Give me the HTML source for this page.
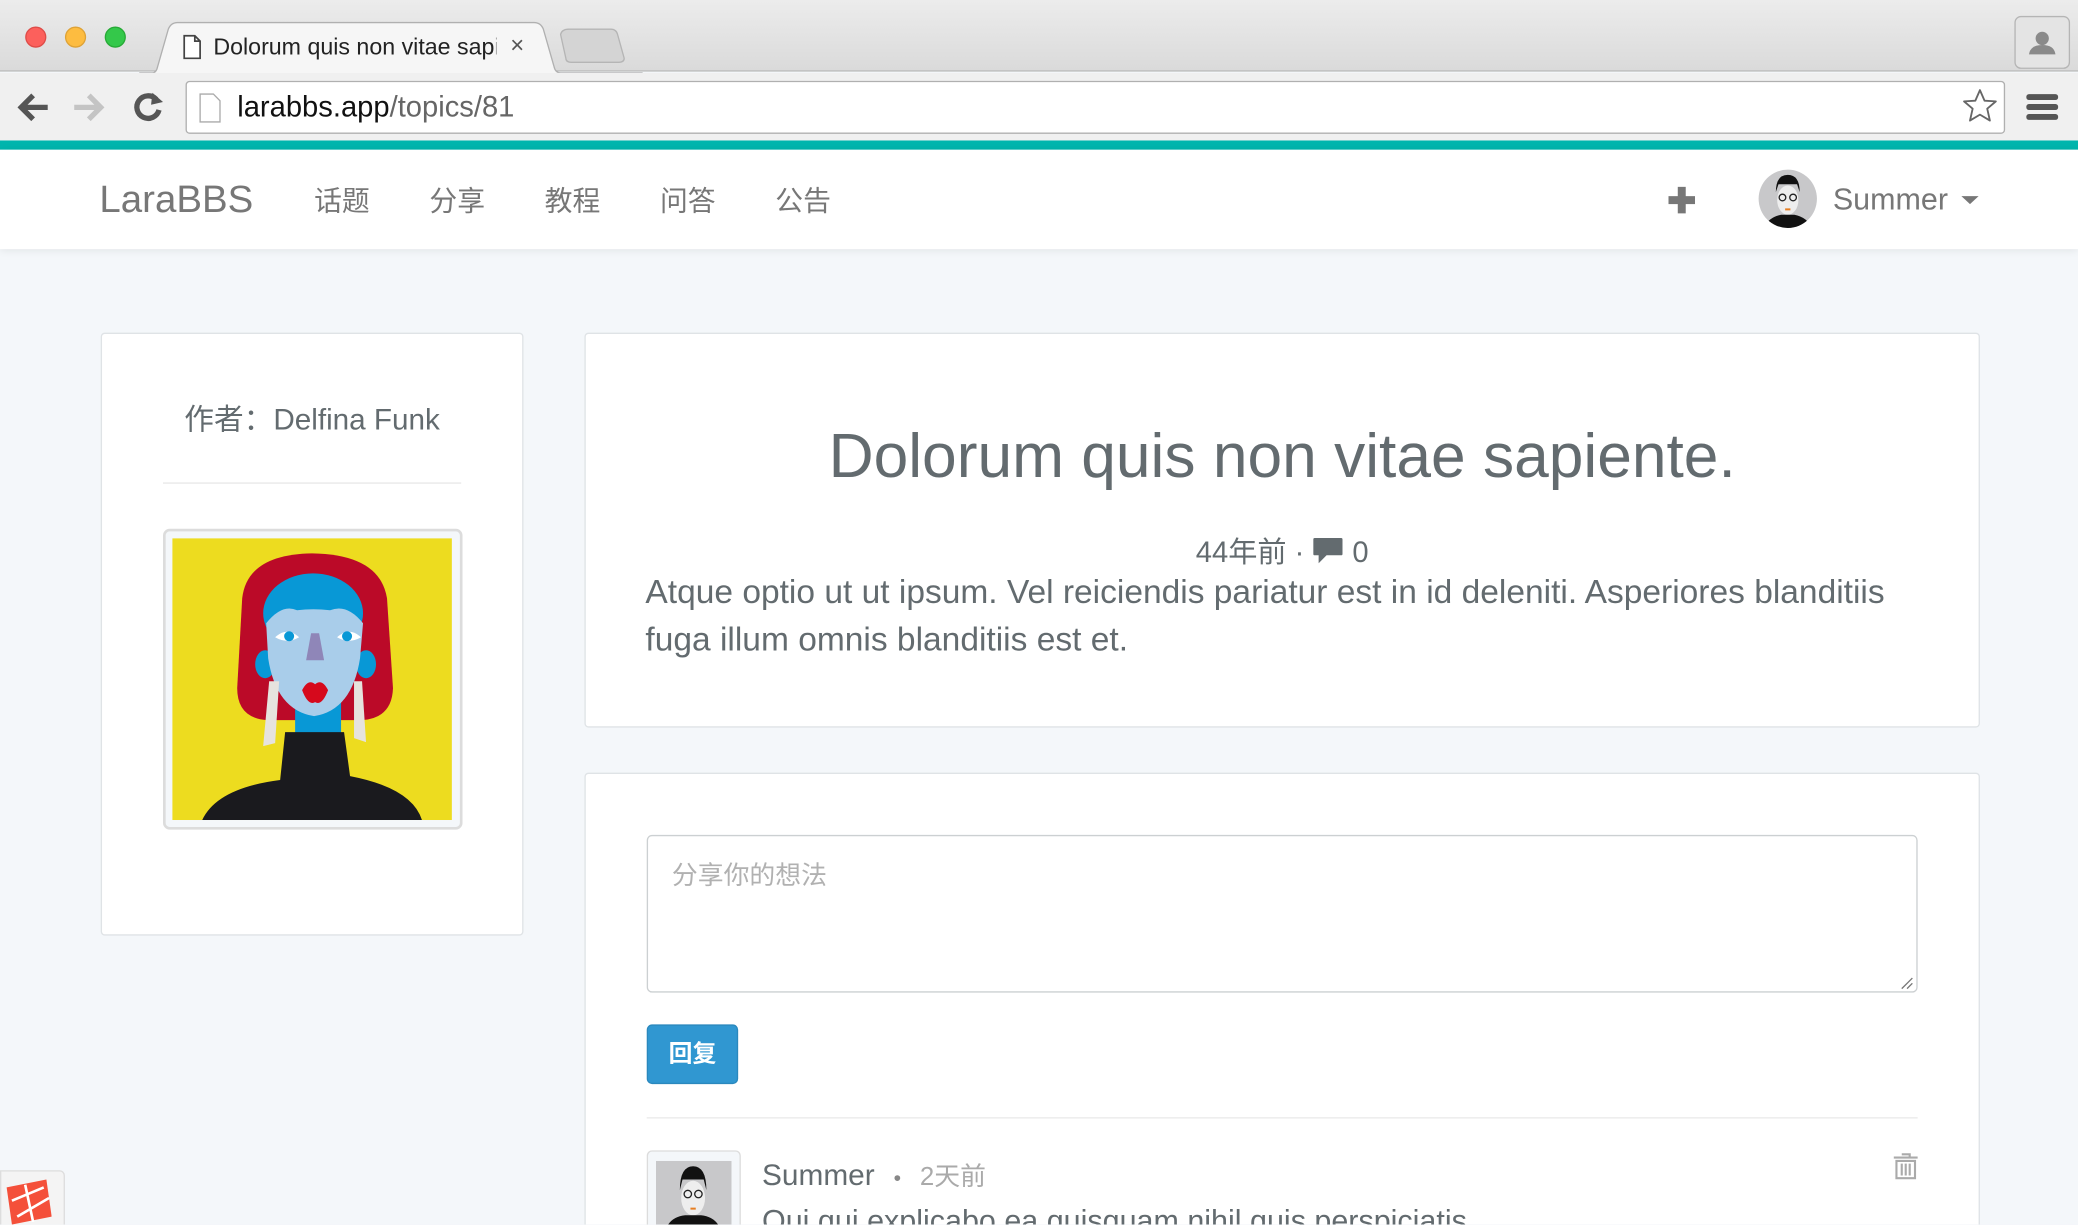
<!DOCTYPE html>
<html><head><meta charset="utf-8"><style>
*{box-sizing:border-box;margin:0;padding:0}
html,body{width:2078px;height:1224px;overflow:hidden;background:#f3f6f9}
#w{position:absolute;left:0;top:0;width:1568px;height:924px;transform:scale(1.32526);transform-origin:0 0;font-family:"Liberation Sans","Noto Sans CJK SC",sans-serif;color:#636b6f;background:#f4f7fa;overflow:hidden}
.a{position:absolute}
.card{position:absolute;background:#fff;border:1px solid #dfe3e6;border-radius:3px}
</style></head><body><div id="w">
<!-- chrome -->
<div class="a" style="left:0;top:0;width:1568px;height:54px;background:linear-gradient(#ececec,#dadada);border-bottom:1px solid #b8b8b8"></div>
<div class="a" style="left:19px;top:20px;width:16px;height:16px;border-radius:50%;background:#fc605c;border:1px solid #de4c48"></div>
<div class="a" style="left:49px;top:20px;width:16px;height:16px;border-radius:50%;background:#fdbc40;border:1px solid #dea236"></div>
<div class="a" style="left:79px;top:20px;width:16px;height:16px;border-radius:50%;background:#34c84a;border:1px solid #27aa36"></div>
<svg class="a" style="left:105px;top:16px" width="380" height="40"><path d="M0 39 L10 39 Q13 39 14 34 L22 6 Q24 1 29 1 L298 1 Q303 1 305 6 L313 34 Q314 39 318 39 L380 39" fill="#f6f6f6" stroke="#b0b0b0"/><path d="M318 10 Q319 6 324 6 L356 6 Q360 6 361 10 L366 28 Q366 31 362 31 L326 31 Q322 31 322 28Z" fill="#d4d4d4" stroke="#b5b5b5"/></svg>
<svg class="a" style="left:138px;top:26px" width="14" height="19"><path d="M1 1 H9 L13 5 V18 H1Z M9 1 V5 H13" fill="#fff" stroke="#444" stroke-width="1.3"/></svg>
<div class="a" style="left:161px;top:25px;font-size:17.5px;color:#222;white-space:nowrap;width:214px;overflow:hidden">Dolorum quis non vitae sap<span style="color:#aaa">iente.</span></div>
<div class="a" style="left:385px;top:24px;font-size:18px;color:#555">×</div>
<div class="a" style="left:1520px;top:12px;width:42px;height:40px;border:1px solid #b5b5b5;border-radius:5px;background:#e4e4e4"></div>
<svg class="a" style="left:1529px;top:22px" width="24" height="22"><circle cx="12" cy="7" r="5" fill="#8a8a8a"/><path d="M2 19 Q3 12 12 12 Q21 12 22 19Z" fill="#8a8a8a"/></svg>
<div class="a" style="left:0;top:55px;width:1568px;height:51px;background:#f0f0f0"></div>
<svg class="a" style="left:12px;top:68px" width="120" height="26"><path d="M24 13 H5 M13 4 L4 13 L13 22" stroke="#555" stroke-width="4" fill="none"/><path d="M44 13 H63 M55 4 L64 13 L55 22" stroke="#c4c4c4" stroke-width="4" fill="none"/><path d="M106 7 A8.5 8.5 0 1 0 108 15" stroke="#555" stroke-width="4" fill="none"/><path d="M103 2 L111 9 L102 11Z" fill="#555"/></svg>
<div class="a" style="left:140px;top:61px;width:1373px;height:40px;background:#fff;border:1px solid #b0b0b0;border-radius:3px"></div>
<svg class="a" style="left:150px;top:70px" width="18" height="23"><path d="M1 1 H11 L16 6 V22 H1Z" fill="#fff" stroke="#aaa"/></svg>
<div class="a" style="left:179px;top:68px;font-size:22px;color:#111">larabbs.app<span style="color:#666">/topics/81</span></div>
<svg class="a" style="left:1480px;top:66px" width="28" height="28"><path d="M14 2 L17.5 10 L26 10.5 L19.5 16 L21.5 25 L14 20.5 L6.5 25 L8.5 16 L2 10.5 L10.5 10Z" fill="none" stroke="#666" stroke-width="1.4" stroke-linejoin="round"/></svg>
<svg class="a" style="left:1528px;top:69px" width="28" height="24"><rect x="1" y="2" width="24" height="4.5" rx="2" fill="#555"/><rect x="1" y="9.5" width="24" height="4.5" rx="2" fill="#555"/><rect x="1" y="17" width="24" height="4.5" rx="2" fill="#555"/></svg>
<div class="a" style="left:0;top:106px;width:1568px;height:7px;background:#00b5ad"></div>
<!-- navbar -->
<div class="a" style="left:0;top:113px;width:1568px;height:75px;background:#fff;box-shadow:0 1px 6px rgba(0,0,0,.08)"></div>
<div class="a" style="left:75px;top:135px;font-size:29px;color:#777">LaraBBS</div>
<div class="a" style="left:237px;top:136px;font-size:21px;color:#777;word-spacing:0"><span>话题</span><span style="margin-left:45px">分享</span><span style="margin-left:45px">教程</span><span style="margin-left:45px">问答</span><span style="margin-left:45px">公告</span></div>
<svg class="a" style="left:1258px;top:140px" width="22" height="22"><rect x="8" y="1" width="6" height="20" fill="#777"/><rect x="1" y="8" width="20" height="6" fill="#777"/></svg>
<svg class="a" style="left:1326px;top:127px" width="46" height="46"><defs><clipPath id="cc"><circle cx="23" cy="23" r="22"/></clipPath></defs><g clip-path="url(#cc)"><rect width="46" height="46" fill="#c8c8ca"/><path d="M14 18 Q14 5 23 5 Q32 5 32 18 L30 12 H16Z" fill="#111"/><ellipse cx="23" cy="24" rx="8" ry="11" fill="#eee"/><circle cx="19" cy="22" r="2.5" fill="none" stroke="#222"/><circle cx="27" cy="22" r="2.5" fill="none" stroke="#222"/><path d="M21 31 h4" stroke="#e67e22" stroke-width="1.5"/><path d="M4 46 Q8 37 18 35 H28 Q38 37 42 46Z" fill="#111"/></g></svg>
<div class="a" style="left:1383px;top:137px;font-size:23px;color:#777">Summer</div>
<svg class="a" style="left:1480px;top:147px" width="14" height="8"><path d="M0 1 H13 L6.5 7Z" fill="#777"/></svg>
<!-- left card -->
<div class="card" style="left:76px;top:251px;width:319px;height:455px"></div>
<div class="a" style="left:76px;top:299px;width:319px;text-align:center;font-size:22.4px;color:#636b6f">作者：Delfina Funk</div>
<div class="a" style="left:123px;top:364px;width:225px;height:1px;background:#e8e8e8"></div>
<div class="a" style="left:123px;top:399px;width:226px;height:227px;border:2px solid #dcdcdc;border-radius:5px;background:#f4f7fa"></div>
<svg class="a" style="left:130px;top:406px" width="211" height="213" viewBox="0 0 280 282"><rect width="280" height="282" fill="#eddc1f"/><path d="M70 60 Q75 16 140 15 Q208 16 215 60 L221 150 Q220 180 190 182 L95 182 Q65 180 65 150Z" fill="#bb0a28"/><ellipse cx="141" cy="75" rx="50" ry="40" fill="#0898d6"/><ellipse cx="93" cy="126" rx="10" ry="14" fill="#0898d6"/><ellipse cx="194" cy="126" rx="10" ry="14" fill="#0898d6"/><rect x="123" y="155" width="46" height="50" fill="#0898d6"/><path d="M94 85 Q110 65 125 72 Q141 70 158 72 Q175 65 191 85 L188 120 Q180 172 142 178 Q104 172 96 120Z" fill="#a9cdea"/><path d="M103 99 Q115 88 127 99 Q115 106 103 99Z" fill="#fff"/><circle cx="117" cy="98" r="5" fill="#0898d6"/><path d="M165 99 Q177 88 189 99 Q177 106 165 99Z" fill="#fff"/><circle cx="175" cy="98" r="5" fill="#0898d6"/><path d="M139 95 L147 95 L152 122 L134 122Z" fill="#8f86b8"/><path d="M130 152 Q136 140 143 146 Q150 140 156 152 Q150 168 143 164 Q136 168 130 152Z" fill="#d6091c"/><path d="M97 143 L107 143 L103 205 L91 208Z" fill="#e6e3de"/><path d="M182 143 L190 143 L194 204 L182 200Z" fill="#e6e3de"/><path d="M113 194 L172 194 L178 238 Q240 250 250 282 L30 282 Q45 250 108 242Z" fill="#1a1a1e"/></svg>
<!-- main card -->
<div class="card" style="left:441px;top:251px;width:1053px;height:298px"></div>
<div class="a" style="left:441px;top:316px;width:1053px;text-align:center;font-size:47px;color:#636b6f">Dolorum quis non vitae sapiente.</div>
<div class="a" style="left:441px;top:399px;width:1053px;text-align:center;font-size:22px;color:#636b6f">44年前 · <svg width="24" height="21" style="vertical-align:-2px"><path d="M2 1 H22 Q23 1 23 2 V13 Q23 14 22 14 H11 L5 20 V14 H2 Q1 14 1 13 V2 Q1 1 2 1Z" fill="#636b6f"/></svg> 0</div>
<div class="a" style="left:487px;top:429px;width:975px;font-size:25.3px;line-height:36px;color:#636b6f;white-space:nowrap">Atque optio ut ut ipsum. Vel reiciendis pariatur est in id deleniti. Asperiores blanditiis<br>fuga illum omnis blanditiis est et.</div>
<!-- reply card -->
<div class="card" style="left:441px;top:583px;width:1053px;height:400px"></div>
<div class="a" style="left:488px;top:630px;width:959px;height:119px;border:1px solid #ccd0d2;border-radius:4px;background:#fff"></div>
<div class="a" style="left:507px;top:644px;font-size:19.5px;color:#b1b1b1">分享你的想法</div>
<svg class="a" style="left:1433px;top:736px" width="11" height="11"><path d="M10 2 L2 10 M10 6 L6 10" stroke="#777"/></svg>
<div class="a" style="left:488px;top:773px;width:69px;height:45px;background:#3097d1;border:1px solid #2a88bd;border-radius:4px;color:#fff;font-size:18px;font-weight:bold;text-align:center;line-height:43px">回复</div>
<div class="a" style="left:488px;top:843px;width:959px;height:1px;background:#eaeaea"></div>
<div class="a" style="left:488px;top:868px;width:71px;height:70px;border:1px solid #dcdcdc;border-radius:4px;background:#f4f7fa"></div>
<svg class="a" style="left:495px;top:876px" width="57" height="50" viewBox="0 0 57 50"><rect width="57" height="50" fill="#c8c8ca"/><path d="M18 22 Q18 4 28 4 Q38 4 38 22 L36 14 H20Z" fill="#111"/><ellipse cx="28" cy="28" rx="9" ry="13" fill="#eee"/><circle cx="24" cy="25" r="2.8" fill="none" stroke="#222"/><circle cx="32" cy="25" r="2.8" fill="none" stroke="#222"/><path d="M26 36 h4" stroke="#e67e22" stroke-width="1.5"/><path d="M8 50 Q12 42 22 41 H34 Q44 42 48 50Z" fill="#111"/></svg>
<div class="a" style="left:575px;top:871px;font-size:22.5px;color:#636b6f;white-space:nowrap">Summer <span style="font-size:16px;margin:0 8px;color:#888">•</span> <span style="font-size:19.5px;color:#aaa">2天前</span></div>
<svg class="a" style="left:1428px;top:869px" width="20" height="22"><path d="M7 2 H13 V4 M1 4.5 H19" stroke="#aaa" stroke-width="1.6" fill="none"/><path d="M3 7 H17 V20 H3Z M7 9 V18 M10 9 V18 M13 9 V18" stroke="#aaa" stroke-width="1.6" fill="none"/></svg>
<div class="a" style="left:575px;top:908px;font-size:23px;color:#636b6f;white-space:nowrap">Qui qui explicabo ea quisquam nihil quis perspiciatis.</div>
<!-- corner badge -->
<div class="a" style="left:0;top:883px;width:49px;height:45px;background:#f4f4f4;border:1px solid #ddd;border-radius:0 4px 0 0"></div>
<svg class="a" style="left:3px;top:888px" width="36" height="36"><path d="M2 8 L32 2 L36 30 L6 36Z" fill="#f4503a"/><path d="M6 18 L30 8 M10 30 L34 16 M16 6 L22 34" stroke="#fff" stroke-width="2"/></svg>
</div></body></html>
